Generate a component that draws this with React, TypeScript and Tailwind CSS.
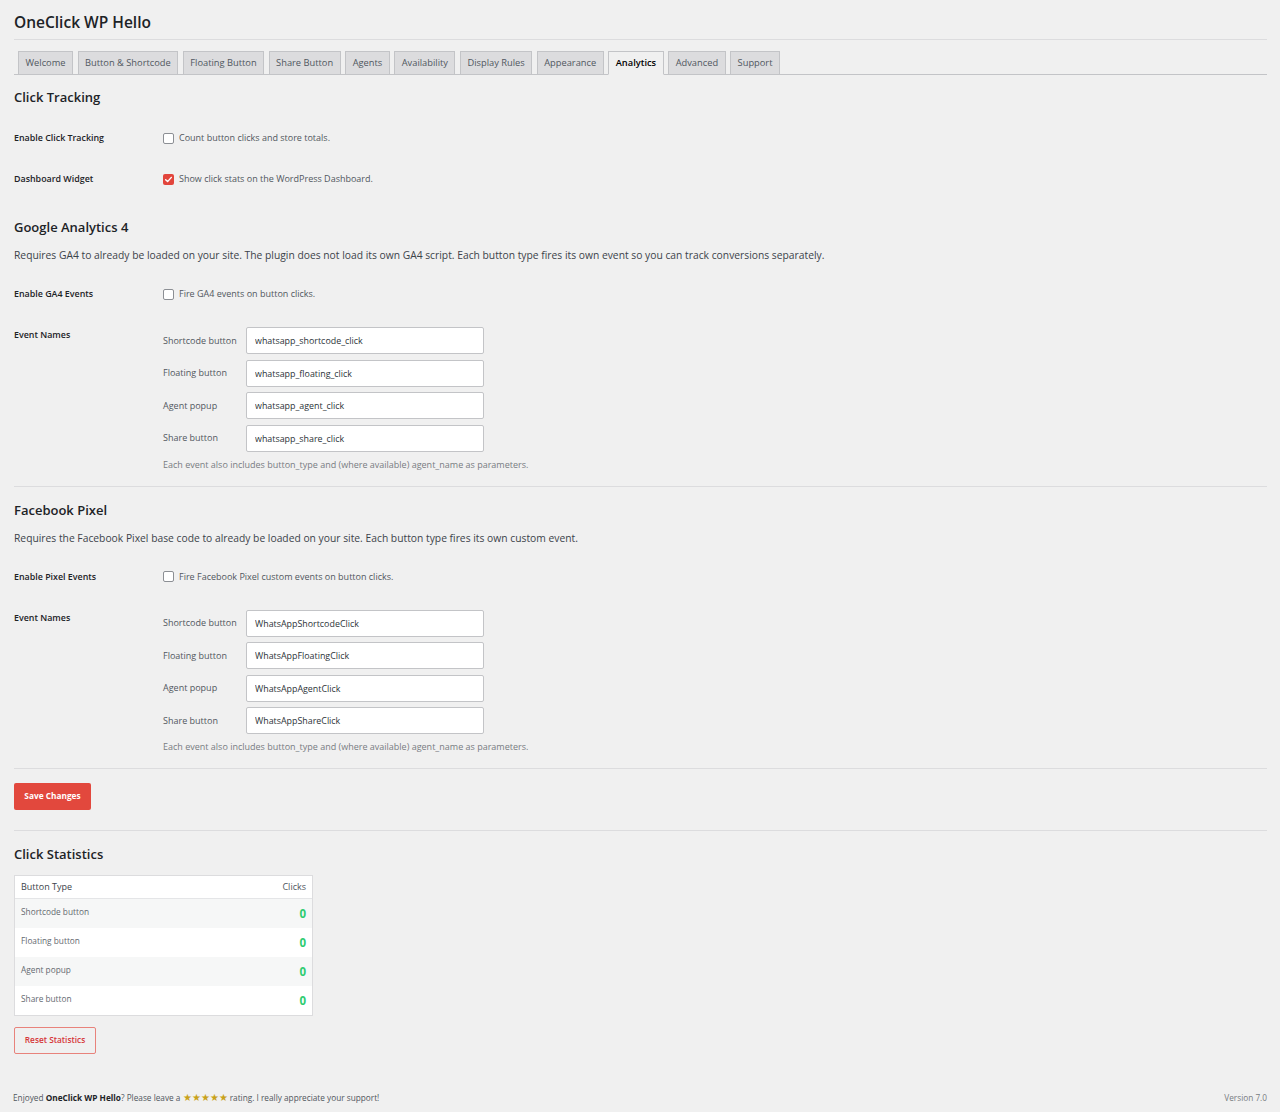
import type { ReactNode } from 'react';

const tabs = [
  'Welcome',
  'Button & Shortcode',
  'Floating Button',
  'Share Button',
  'Agents',
  'Availability',
  'Display Rules',
  'Appearance',
  'Analytics',
  'Advanced',
  'Support',
];

const ga4Events = [
  { label: 'Shortcode button', value: 'whatsapp_shortcode_click' },
  { label: 'Floating button', value: 'whatsapp_floating_click' },
  { label: 'Agent popup', value: 'whatsapp_agent_click' },
  { label: 'Share button', value: 'whatsapp_share_click' },
];

const pixelEvents = [
  { label: 'Shortcode button', value: 'WhatsAppShortcodeClick' },
  { label: 'Floating button', value: 'WhatsAppFloatingClick' },
  { label: 'Agent popup', value: 'WhatsAppAgentClick' },
  { label: 'Share button', value: 'WhatsAppShareClick' },
];

const stats = [
  { type: 'Shortcode button', clicks: 0 },
  { type: 'Floating button', clicks: 0 },
  { type: 'Agent popup', clicks: 0 },
  { type: 'Share button', clicks: 0 },
];

function Checkbox({ checked = false }: { checked?: boolean }) {
  if (checked) {
    return (
      <span className="flex h-[11px] w-[11px] items-center justify-center rounded-[2px] bg-[#e2453c]">
        <svg viewBox="0 0 12 12" className="h-[9px] w-[9px]" fill="none">
          <path d="M2.2 6.3 4.8 8.8 9.8 3.2" stroke="#fff" strokeWidth="1.9" strokeLinecap="round" strokeLinejoin="round" />
        </svg>
      </span>
    );
  }
  return <span className="block h-[11px] w-[11px] rounded-[2px] border border-[#8c8f94] bg-white" />;
}

function SectionTitle({ children, className = '' }: { children: ReactNode; className?: string }) {
  return (
    <h2 className={`h-[20px] text-[13px] font-semibold leading-[20px] text-[#1d2327] ${className}`}>{children}</h2>
  );
}

function CheckRow({ label, text, checked, className = '' }: { label: string; text: string; checked?: boolean; className?: string }) {
  return (
    <div className={`flex h-[41px] items-center pt-[1px] ${className}`}>
      <div className="w-[149px] text-[8.9px] font-semibold text-[#1d2327]">{label}</div>
      <label className="flex items-center gap-[5px] text-[9px] text-[#50575e]">
        <Checkbox checked={checked} />
        {text}
      </label>
    </div>
  );
}

function EventNames({ events }: { events: { label: string; value: string }[] }) {
  return (
    <div className="mt-[13px] flex">
      <div className="w-[149px] pt-[1px] text-[8.9px] font-semibold leading-[14px] text-[#1d2327]">Event Names</div>
      <div>
        <div className="flex flex-col gap-[5.5px]">
          {events.map((e) => (
            <div key={e.label} className="flex items-center">
              <span className="w-[83px] text-[9px] text-[#50575e]">{e.label}</span>
              <input
                readOnly
                value={e.value}
                className="h-[27px] w-[238px] rounded-[2px] border border-[#c3c4c7] bg-white px-[8px] text-[8.9px] text-[#2c3338] outline-none"
              />
            </div>
          ))}
        </div>
        <p className="mt-[6px] text-[9px] leading-[14px] text-[#787c82]">
          Each event also includes button_type and (where available) agent_name as parameters.
        </p>
      </div>
    </div>
  );
}

export default function App() {
  return (
    <div className="min-h-[1112px] bg-[#f0f0f0] pl-[14px] pr-[13px] font-['Open_Sans',sans-serif] text-[#3c434a]">
      <div className="h-[40px] border-b border-[#dcdcde] pt-[13px]">
        <h1 className="text-[15.5px] font-semibold leading-[18px] text-[#1d2327]">OneClick WP Hello</h1>
      </div>

      <nav className="flex gap-[4.5px] border-b border-[#c3c4c7] pl-[4px] pt-[11px]">
        {tabs.map((t) => {
          const active = t === 'Analytics';
          return (
            <span
              key={t}
              className={`-mb-px flex h-[24px] items-center border px-[6.5px] text-[9.3px] ${
                active
                  ? 'border-[#c3c4c7] border-b-[#f0f0f0] bg-[#f0f0f0] font-semibold text-[#000]'
                  : 'border-[#c3c4c7] bg-[#dcdcde] text-[#50575e]'
              }`}
            >
              {t}
            </span>
          );
        })}
      </nav>

      <SectionTitle className="mt-[12px]">Click Tracking</SectionTitle>
      <CheckRow className="mt-[10px]" label="Enable Click Tracking" text="Count button clicks and store totals." />
      <CheckRow label="Dashboard Widget" text="Show click stats on the WordPress Dashboard." checked />

      <SectionTitle className="mt-[18px]">Google Analytics 4</SectionTitle>
      <p className="mt-[10px] text-[10.3px] leading-[16px]">
        Requires GA4 to already be loaded on your site. The plugin does not load its own GA4 script. Each button type fires its own event so you can track conversions separately.
      </p>
      <CheckRow className="mt-[10px]" label="Enable GA4 Events" text="Fire GA4 events on button clicks." />
      <EventNames events={ga4Events} />
      <div className="mt-[14px] border-t border-[#dcdcde]" />

      <SectionTitle className="mt-[13px]">Facebook Pixel</SectionTitle>
      <p className="mt-[10px] text-[10.3px] leading-[16px]">
        Requires the Facebook Pixel base code to already be loaded on your site. Each button type fires its own custom event.
      </p>
      <CheckRow className="mt-[10px]" label="Enable Pixel Events" text="Fire Facebook Pixel custom events on button clicks." />
      <EventNames events={pixelEvents} />
      <div className="mt-[14px] border-t border-[#dcdcde]" />

      <button
        type="button"
        className="mt-[14px] flex h-[27px] w-[77px] items-center justify-center rounded-[2px] bg-[#e2483d] text-[8.3px] font-bold text-white"
      >
        Save Changes
      </button>
      <div className="mt-[20px] border-t border-[#dcdcde]" />

      <SectionTitle className="mt-[13px]">Click Statistics</SectionTitle>
      <div className="mt-[11px] w-[299px] border border-[#dcdcde] bg-white">
        <div className="flex h-[23px] items-center justify-between border-b border-[#e4e5e7] px-[6px] text-[9px] text-[#3c434a]">
          <span>Button Type</span>
          <span className="text-[#50575e]">Clicks</span>
        </div>
        {stats.map((s, i) => (
          <div
            key={s.type}
            className={`flex h-[29px] justify-between px-[6px] ${i % 2 === 0 ? 'bg-[#f6f7f7]' : 'bg-white'}`}
          >
            <span className="pt-[7px] text-[8.3px] leading-[12px] text-[#646970]">{s.type}</span>
            <span className="pt-[7px] text-[11.5px] font-bold leading-[16px] text-[#2ecc71]">{s.clicks}</span>
          </div>
        ))}
      </div>

      <button
        type="button"
        className="mt-[11px] flex h-[27px] w-[82px] items-center justify-center rounded-[2px] border border-[#e8827b] text-[8.3px] font-semibold text-[#d63638]"
      >
        Reset Statistics
      </button>

      <footer className="mt-[37px] flex items-center justify-between pb-[7px] text-[8.25px] leading-[14px] text-[#50575e]">
        <span className="-ml-px">
          Enjoyed <strong className="font-bold text-[#1d2327]">OneClick WP Hello</strong>? Please leave a{' '}
          <span className="text-[9.5px] leading-[14px] text-[#c9a21a]">★★★★★</span> rating. I really appreciate your support!
        </span>
        <span className="text-[#787c82]">Version 7.0</span>
      </footer>
    </div>
  );
}
